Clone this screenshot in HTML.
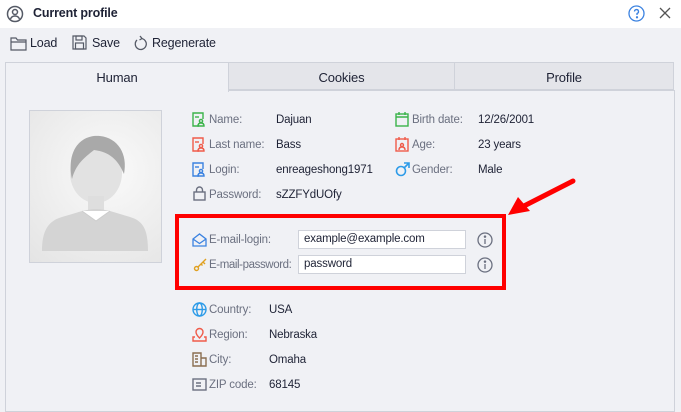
<!DOCTYPE html><html><head><style>
body{margin:0;width:681px;height:403px;overflow:hidden;background:#f0f1f5;font-family:"Liberation Sans",sans-serif;font-size:11.5px;letter-spacing:-0.15px;color:#1e2235;position:relative}
.a{position:absolute;white-space:nowrap}
.l{color:#6b7080}
.t{position:absolute;top:62px;height:28px;line-height:29px;text-align:center;font-size:13px;border:1px solid #cfd2da;box-sizing:border-box}
</style></head><body>
<div class="a" style="left:0;top:0;width:681px;height:28px;background:#fff"></div>
<svg class="a" style="left:6px;top:5px" width="18" height="18" viewBox="0 0 18 18" fill="none" stroke="#555a66" stroke-width="1.5"><circle cx="9" cy="9" r="7.5"/><circle cx="9" cy="7" r="2.5"/><path d="M4.5 14c1-2.5 2.5-3 4.5-3s3.5.5 4.5 3"/></svg>
<div class="a" style="left:33px;top:6px;font-weight:bold;font-size:12.5px">Current profile</div>
<svg class="a" style="left:628px;top:5px" width="17" height="17" viewBox="0 0 17 17" fill="none" stroke="#3b82e0" stroke-width="1.3"><circle cx="8.5" cy="8.5" r="7.5"/><path d="M6.5 6.5a2 2 0 1 1 2.5 2v1.5"/><circle cx="9" cy="12.3" r=".5" fill="#3b82e0"/></svg>
<svg class="a" style="left:659px;top:7px" width="12" height="12" stroke="#555" stroke-width="1.3"><path d="M1 1l10 10M11 1L1 11"/></svg>
<svg class="a" style="left:10px;top:36px" width="17" height="15" fill="none" stroke="#555a66" stroke-width="1.2"><path d="M1 2h5l1.5 2H16v10H1zM1 6h15"/></svg>
<div class="a" style="left:30px;top:36px;font-size:12.5px">Load</div>
<svg class="a" style="left:72px;top:35px" width="15" height="15" fill="none" stroke="#555a66" stroke-width="1.2"><path d="M1 1h11l2 2v11H1z"/><rect x="4" y="1" width="6" height="4"/><rect x="3.5" y="8" width="8" height="6"/></svg>
<div class="a" style="left:92px;top:36px;font-size:12.5px">Save</div>
<svg class="a" style="left:133px;top:35px" width="15" height="16" fill="none" stroke="#555a66" stroke-width="1.3"><path d="M4 5a5.5 5.5 0 1 0 4-1.5"/><path d="M7 1l2 2.5L6.5 5"/></svg>
<div class="a" style="left:152px;top:36px;font-size:12.5px">Regenerate</div>
<div class="a" style="left:5px;top:90px;width:668px;height:320px;border:1px solid #cfd2da;background:#f0f1f5"></div>
<div class="t" style="left:5px;width:224px;background:#f0f1f5;border-bottom:none;height:30px">Human</div>
<div class="t" style="left:228px;width:227px;background:#e4e5ea">Cookies</div>
<div class="t" style="left:454px;width:220px;background:#e4e5ea">Profile</div>
<div class="a" style="left:29px;top:110px;width:131px;height:151px;border:1px solid #cfd2da;background:radial-gradient(circle at 60% 40%,#fafafa,#e4e4e4)">
<svg width="131" height="151"><ellipse cx="66" cy="62" rx="26" ry="30" fill="#e2e2e2"/><path d="M42 68c-6-30 10-45 28-43 18 2 28 18 24 38-6-14-14-22-30-24-10 8-18 14-22 29z" fill="#a9a9a9"/><path d="M58 85v15h16V85z" fill="#dedede"/><path d="M12 140c0-20 6-30 20-34 14-4 24-8 34-8s20 4 34 8c14 4 18 14 18 34z" fill="#d4d4d4"/><path d="M52 100l14 10 14-10" fill="#fff" stroke="#ccc"/></svg></div>
<svg class="a" style="left:192px;top:112px" width="14" height="15" fill="none" stroke="#3bb34a" stroke-width="1.4"><path d="M7 14H1V1h10v6"/><circle cx="9" cy="9" r="1.6"/><path d="M6 14c0-2 1-3 3-3s3 1 3 3z"/><path d="M3 5h4"/></svg>
<div class="a l" style="left:209px;top:114px">Name:</div><div class="a" style="left:276px;top:114px">Dajuan</div>
<svg class="a" style="left:192px;top:137px" width="14" height="15" fill="none" stroke="#ef5b4a" stroke-width="1.4"><path d="M7 14H1V1h10v6"/><circle cx="9" cy="9" r="1.6"/><path d="M6 14c0-2 1-3 3-3s3 1 3 3z"/><path d="M3 5h4"/></svg>
<div class="a l" style="left:209px;top:139px">Last name:</div><div class="a" style="left:276px;top:139px">Bass</div>
<svg class="a" style="left:192px;top:162px" width="14" height="15" fill="none" stroke="#3b82e0" stroke-width="1.4"><path d="M7 14H1V1h10v6"/><circle cx="9" cy="9" r="1.6"/><path d="M6 14c0-2 1-3 3-3s3 1 3 3z"/><path d="M3 5h4"/></svg>
<div class="a l" style="left:209px;top:164px">Login:</div><div class="a" style="left:276px;top:164px">enreageshong1971</div>
<svg class="a" style="left:193px;top:186px" width="13" height="15" fill="none" stroke="#6b7080" stroke-width="1.4"><rect x="1" y="6" width="11" height="8"/><path d="M3.5 6V4a3 3 0 0 1 6 0v2"/></svg>
<div class="a l" style="left:209px;top:189px">Password:</div><div class="a" style="left:276px;top:189px">sZZFYdUOfy</div>
<svg class="a" style="left:395px;top:112px" width="14" height="15" fill="none" stroke="#3bb34a" stroke-width="1.4"><rect x="1" y="2" width="12" height="12"/><path d="M1 5h12M4 0v3M10 0v3"/></svg>
<div class="a l" style="left:412px;top:114px">Birth date:</div><div class="a" style="left:478px;top:114px">12/26/2001</div>
<svg class="a" style="left:395px;top:137px" width="14" height="15" fill="none" stroke="#ef5b4a" stroke-width="1.4"><rect x="1" y="2" width="12" height="12"/><path d="M4 0v3M10 0v3"/><circle cx="7" cy="8" r="1.5"/><path d="M4 13c0-2 1-3 3-3s3 1 3 3"/></svg>
<div class="a l" style="left:412px;top:139px">Age:</div><div class="a" style="left:478px;top:139px">23 years</div>
<svg class="a" style="left:395px;top:162px" width="15" height="15" fill="none" stroke="#2d9be8" stroke-width="1.6"><circle cx="6" cy="9" r="4.5"/><path d="M9 6l5-5M9 1h5v5"/></svg>
<div class="a l" style="left:412px;top:164px">Gender:</div><div class="a" style="left:478px;top:164px">Male</div>
<div class="a" style="left:175px;top:214px;width:323px;height:68px;border:4px solid #f00"></div>
<svg class="a" style="left:500px;top:175px" width="80" height="50"><path d="M73 6L22 32" stroke="#f00" stroke-width="5" stroke-linecap="round"/><path d="M8 40L18 22 30 36z" fill="#f00"/></svg>
<svg class="a" style="left:192px;top:233px" width="15" height="14" fill="none" stroke="#3b82e0" stroke-width="1.3"><path d="M1 6l6.5-5 6.5 5v7H1zM1 6l6.5 4.5L14 6"/></svg>
<div class="a l" style="left:209px;top:234px">E-mail-login:</div>
<div class="a" style="left:298px;top:230px;width:168px;height:19px;background:#fff;border:1px solid #cfd2da;box-sizing:border-box;padding:2px 5px">example@example.com</div>
<svg class="a" style="left:193px;top:258px" width="14" height="14" fill="none" stroke="#e0a020" stroke-width="1.4"><circle cx="3.5" cy="10.5" r="2"/><path d="M5 9l8-8M10 4l2 2M8 6l1.5 1.5"/></svg>
<div class="a l" style="left:209px;top:259px;letter-spacing:-0.4px">E-mail-password:</div>
<div class="a" style="left:298px;top:255px;width:168px;height:19px;background:#fff;border:1px solid #cfd2da;box-sizing:border-box;padding:2px 5px">password</div>
<svg class="a" style="left:477px;top:232px" width="16" height="16" fill="none" stroke="#6b7080" stroke-width="1.3"><circle cx="8" cy="8" r="7"/><path d="M8 7v5"/><circle cx="8" cy="4.6" r=".6" fill="#6b7080"/></svg>
<svg class="a" style="left:477px;top:257px" width="16" height="16" fill="none" stroke="#6b7080" stroke-width="1.3"><circle cx="8" cy="8" r="7"/><path d="M8 7v5"/><circle cx="8" cy="4.6" r=".6" fill="#6b7080"/></svg>
<svg class="a" style="left:192px;top:302px" width="15" height="15" fill="none" stroke="#2d9be8" stroke-width="1.4"><circle cx="7.5" cy="7.5" r="6.5"/><ellipse cx="7.5" cy="7.5" rx="2.8" ry="6.5"/><path d="M1 7.5h13"/></svg>
<div class="a l" style="left:209px;top:304px">Country:</div><div class="a" style="left:269px;top:304px">USA</div>
<svg class="a" style="left:192px;top:327px" width="15" height="15" fill="none" stroke="#ef5b4a" stroke-width="1.4"><path d="M7.5 11C4 7.5 4 6 4 5a3.5 3.5 0 0 1 7 0c0 1 0 2.5-3.5 6z"/><path d="M3 10H1v4h13v-4h-2"/></svg>
<div class="a l" style="left:209px;top:329px">Region:</div><div class="a" style="left:269px;top:329px">Nebraska</div>
<svg class="a" style="left:192px;top:352px" width="15" height="15" fill="none" stroke="#8a6e50" stroke-width="1.4"><path d="M1 14V1h8v13zM9 6h5v8H1M3 4h3M3 7h3M3 10h3"/></svg>
<div class="a l" style="left:209px;top:354px">City:</div><div class="a" style="left:269px;top:354px">Omaha</div>
<svg class="a" style="left:192px;top:378px" width="15" height="13" fill="none" stroke="#6b7080" stroke-width="1.4"><rect x="1" y="1" width="13" height="11"/><path d="M4 5h5M4 8h5"/></svg>
<div class="a l" style="left:209px;top:379px">ZIP code:</div><div class="a" style="left:269px;top:379px">68145</div>
</body></html>
